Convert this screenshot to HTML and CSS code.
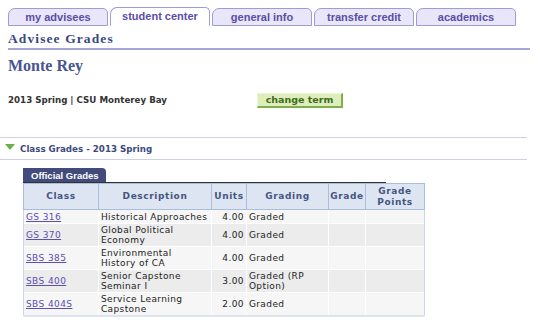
FILE: index.html
```html
<!DOCTYPE html>
<html>
<head>
<meta charset="utf-8">
<link rel="stylesheet" href="styles.css">
</head>
<body>
<div class="tabs">
  <div class="tab">my advisees</div>
  <div class="tab active">student center</div>
  <div class="tab">general info</div>
  <div class="tab">transfer credit</div>
  <div class="tab">academics</div>
</div>
<h1 class="page-title">Advisee Grades</h1>
<h2 class="student">Monte Rey</h2>
<div class="term-row">
  <span class="term">2013 Spring | CSU Monterey Bay</span>
  <span class="btn">change term</span>
</div>
<div class="section">
  <span class="tri"></span>
  <span class="section-title">Class Grades - 2013 Spring</span>
</div>
<div class="grid-wrap">
  <div class="grid-tab">Official Grades</div>
  <div class="grid-line"></div>
  <table class="grades">
    <thead>
      <tr>
        <th class="c1">Class</th>
        <th class="c2">Description</th>
        <th class="c3">Units</th>
        <th class="c4">Grading</th>
        <th class="c5">Grade</th>
        <th class="c6">Grade<br>Points</th>
      </tr>
    </thead>
    <tbody>
      <tr class="odd"><td><a href="#">GS 316</a></td><td>Historical Approaches</td><td class="num">4.00</td><td>Graded</td><td></td><td></td></tr>
      <tr class="even"><td><a href="#">GS 370</a></td><td>Global Political<br>Economy</td><td class="num">4.00</td><td>Graded</td><td></td><td></td></tr>
      <tr class="odd"><td><a href="#">SBS 385</a></td><td>Environmental<br>History of CA</td><td class="num">4.00</td><td>Graded</td><td></td><td></td></tr>
      <tr class="even"><td><a href="#">SBS 400</a></td><td>Senior Capstone<br>Seminar I</td><td class="num">3.00</td><td>Graded (RP<br>Option)</td><td></td><td></td></tr>
      <tr class="odd"><td><a href="#">SBS 404S</a></td><td>Service Learning<br>Capstone</td><td class="num">2.00</td><td>Graded</td><td></td><td></td></tr>
    </tbody>
  </table>
</div>
</body>
</html>
```
FILE: styles.css
```css
html, body { margin: 0; padding: 0; background: #fff; }
body { width: 540px; height: 326px; overflow: hidden; font-family: "DejaVu Sans", Verdana, sans-serif; }

.tabs { display: flex; gap: 2px; padding: 7px 0 0 8px; height: 19px; }
.tab {
  width: 100px; height: 18px; box-sizing: border-box;
  border: 1px solid #9f9bd3;
  border-radius: 7px 5px 0 0;
  background: #e8e6f8;
  font: bold 11px "Liberation Sans", Arial, sans-serif;
  color: #5a4ea6; text-align: center; line-height: 16px;
  margin-top: 1px;
}
.tab.active { background: #fff; border-bottom-color: #fff; height: 19px; margin-top: 0; line-height: 17px; }

.page-title {
  margin: 5px 0 0 8px; width: 522px; height: 15px; line-height: 15px;
  font: bold 13.5px/15px "Liberation Serif", Georgia, serif; letter-spacing: 1.1px;
  color: #3a4781; border-bottom: 2px solid #a5a6d4; padding-bottom: 2px;
}
.student {
  margin: 7px 0 0 8px; height: 18px;
  font: bold 16px/18px "Liberation Serif", Georgia, serif; color: #4a5592;
}
.term-row { display: flex; align-items: center; margin: 17px 0 0 8px; height: 16px; }
.term { width: 249px; font: bold 8.7px "DejaVu Sans", Verdana, sans-serif; color: #333; }
.btn {
  width: 86px; height: 15px; box-sizing: border-box;
  background: #deeebb; border-right: 2px solid #80ae4c; border-bottom: 2px solid #80ae4c;
  border-top: 1px solid #eaf5d4; border-left: 1px solid #eaf5d4;
  font: bold 9.5px "DejaVu Sans", Verdana, sans-serif; color: #3f6a1c;
  text-align: center; line-height: 12px;
}

.section {
  margin-top: 29px; width: 527px; height: 23px; box-sizing: border-box;
  border-top: 1px solid #cfd0e0; border-bottom: 1px solid #cfd0e0;
  display: flex; align-items: center; padding-left: 5px;
}
.tri { width: 0; height: 0; border-left: 5px solid transparent; border-right: 5px solid transparent; border-top: 6px solid #6cae4a; margin-right: 5px; margin-top: -3px; }
.section-title { font: bold 8.7px "DejaVu Sans", Verdana, sans-serif; color: #3b4a7c; }

.grid-wrap { margin: 8px 0 0 23px; }
.grid-tab {
  width: 83px; height: 14px; box-sizing: border-box; white-space: nowrap;
  background: #434b7b; color: #fff; border-radius: 0 4px 0 0;
  font: bold 9.5px "Liberation Sans", Arial, sans-serif; line-height: 15px; padding-left: 8px;
}
.grid-line { width: 363px; height: 1px; background: #333; }

.grades { border-collapse: collapse; width: 402px; font: 9px "DejaVu Sans", Verdana, sans-serif; letter-spacing: 0.4px; color: #222; }
.grades th {
  background: #dde5f2; color: #44557f; font-weight: bold; border: 1px solid #a9bddc;
  height: 25px; padding: 0; line-height: 11px; letter-spacing: 0.6px;
}
.c1 { width: 76px; } .c2 { width: 114px; } .c3 { width: 34px; } .c4 { width: 83px; } .c5 { width: 36px; } .c6 { width: 59px; }
.grades td { padding: 1px 2px; line-height: 10px; height: 11px; border-left: 1px solid #fff; border-top: 1px solid #fff; vertical-align: middle; }
.grades td:first-child { border-left: 1px solid #ccd6e8; }
.grades td:last-child { border-right: 1px solid #ccd6e8; }
.grades tbody tr:last-child td { border-bottom: 2px solid #dfe4f0; }
.grades tr.odd td { background: #f6f6f6; }
.grades tr.even td { background: #ececec; }
.grades td.num { text-align: right; }
.grades a { color: #5b4fb0; }
```
